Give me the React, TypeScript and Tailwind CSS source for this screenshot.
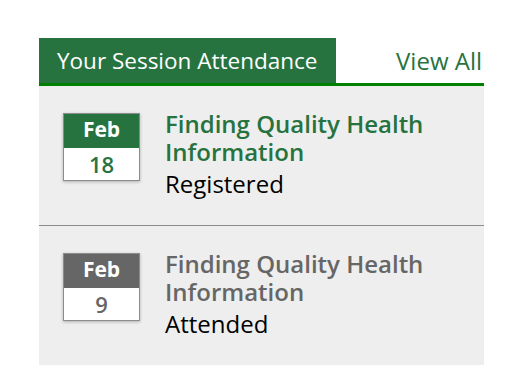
import React from "react";

const items = [
  { month: "Feb", day: "18", title: "Finding Quality Health Information", status: "Registered", active: true },
  { month: "Feb", day: "9", title: "Finding Quality Health Information", status: "Attended", active: false },
];

export default function App() {
  return (
    <div className="w-[511px] h-[382px] bg-white pt-[38px] pl-[39px]" style={{ fontFamily: '"Open Sans", sans-serif' }}>
      <div className="w-[445px]">
        <div className="flex items-end justify-between border-b-[3px] border-[#008000]">
          <div className="h-[45px] w-[297px] bg-[#267340] text-white text-[22.5px] leading-[45px] pl-[18px] whitespace-nowrap">
            Your Session Attendance
          </div>
          <a className="text-[#267340] text-[24px] leading-[45px] pr-[2px]">View All</a>
        </div>
        <div className="bg-[#eeeeee]">
          {items.map((it, i) => (
            <div key={i} className={i > 0 ? "border-t border-[#8c8c8c]" : ""}>
              <div className="flex items-start h-[139px] pt-[27px] pl-[24px]">
                <div className="w-[77px] shrink-0 border border-[#8c8c8c] shadow-[0_1px_3px_rgba(0,0,0,0.25)]">
                  <div className={`h-[34px] text-white font-bold text-[21px] leading-[30px] text-center ${it.active ? "bg-[#267340]" : "bg-[#666666]"}`}>
                    {it.month}
                  </div>
                  <div className={`h-[32px] bg-white font-semibold text-[22px] leading-[32px] text-center ${it.active ? "text-[#267340]" : "text-[#666666]"}`}>
                    {it.day}
                  </div>
                </div>
                <div className="ml-[25px] w-[300px] -mt-[3px]">
                  <div className={`text-[24px] font-semibold leading-[28px] ${it.active ? "text-[#267340]" : "text-[#666666]"}`}>
                    {it.title}
                  </div>
                  <div className="text-[24px] leading-[30px] mt-[3px] text-black">{it.status}</div>
                </div>
              </div>
            </div>
          ))}
        </div>
      </div>
    </div>
  );
}
